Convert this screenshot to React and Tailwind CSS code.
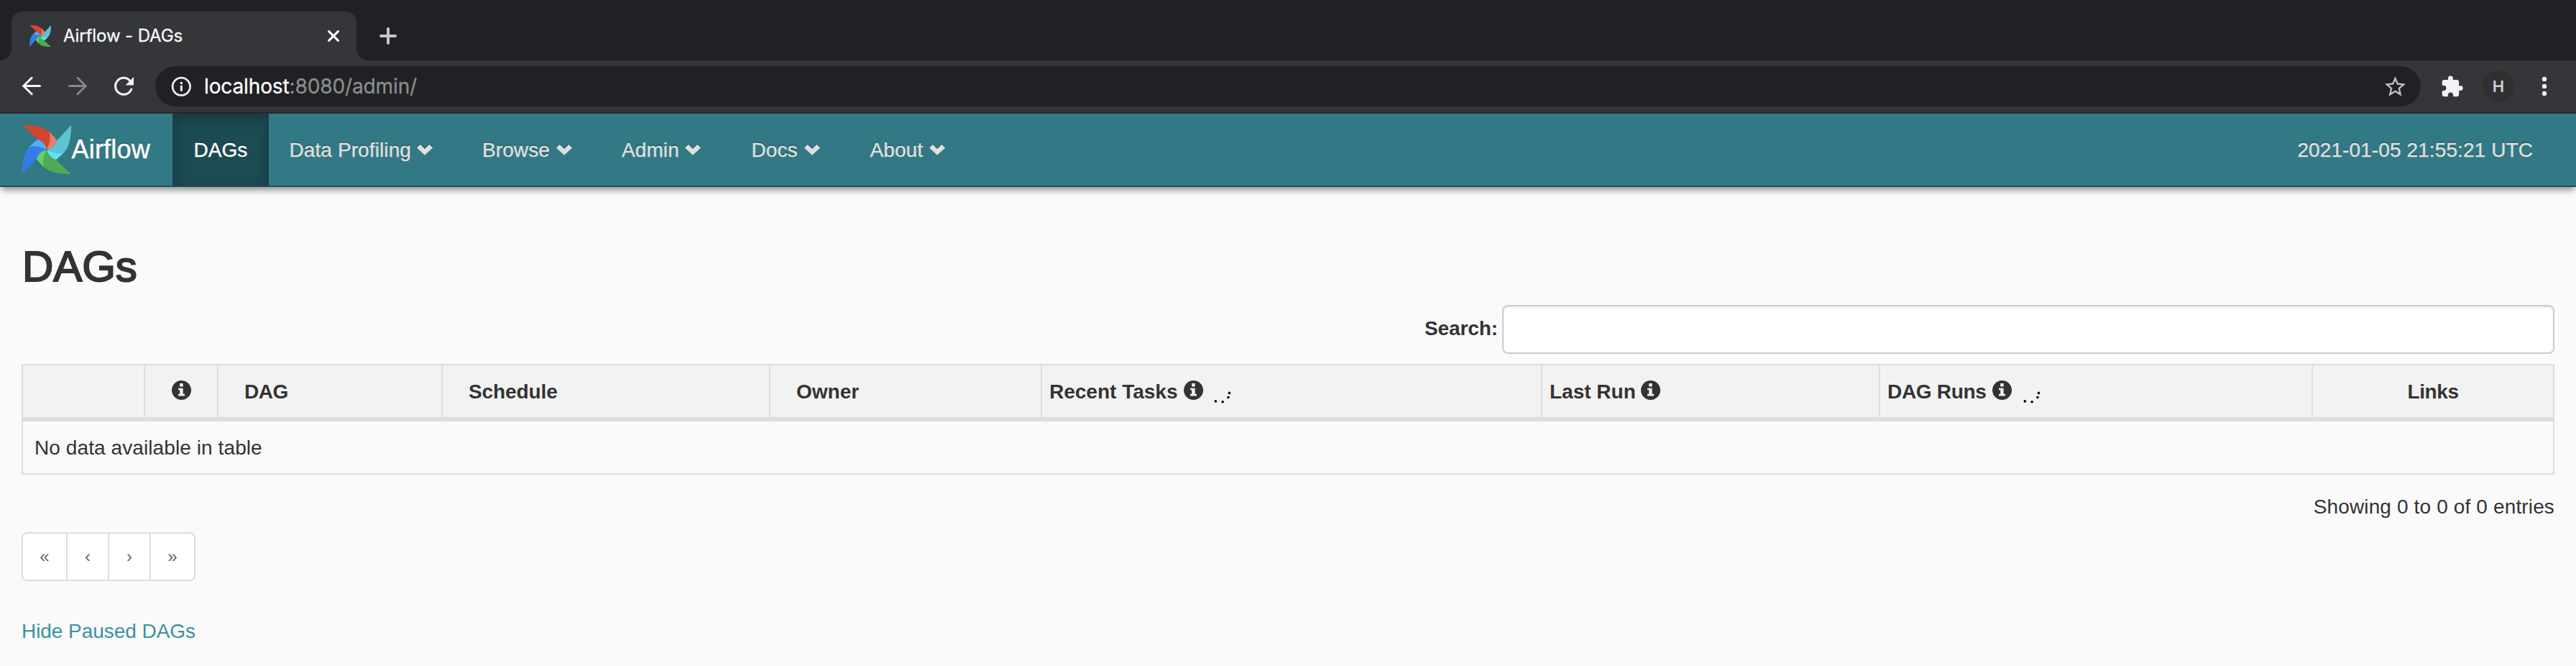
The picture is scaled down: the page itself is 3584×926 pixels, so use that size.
import React from "react";
import { MdStarBorder, MdExtension } from "react-icons/md";

const blades = [
  { angle: 0, main: "#d4452e", tip: "#ef7b60" },
  { angle: 90, main: "#5bc4d3", tip: "#66e0ee" },
  { angle: 180, main: "#4fab53", tip: "#62d36b" },
  { angle: 270, main: "#347de8", tip: "#4fb0fa" },
];

function Pinwheel({ className }) {
  return (
    <svg className={className} viewBox="0 0 204 204">
      {blades.map((b) => (
        <g key={b.angle} transform={`rotate(${b.angle} 102 102)`}>
          <path fill={b.main} d="M0 0C50 0 88 7 112 28C120 50 116 72 102 102C98 86 88 68 64 59Z" />
          <path fill={b.tip} d="M112 28C125 40 136 52 145 64C136 88 118 98 102 102C116 72 120 50 112 28Z" />
        </g>
      ))}
      <circle cx="102" cy="102" r="2.5" fill="#4a4848" />
    </svg>
  );
}

function Chevron({ className }) {
  return (
    <svg className={`-mt-[4px] h-[17px] w-[22px] shrink-0 ${className}`} viewBox="0 0 22 17">
      <path fill="#265a64" d="M0 4.5L4.5 0L11 6.5L17.5 0L22 4.5L11 13.5Z" />
      <path fill="#dfdfdf" d="M0 6.4L4.6 1.8L11 8.1L17.4 1.8L22 6.4L11 16.8Z" />
    </svg>
  );
}

function InfoIcon({ className = "" }) {
  return (
    <svg className={`relative -top-[3px] h-[27px] w-[27px] shrink-0 ${className}`} viewBox="0 0 27 27">
      <circle cx="13.5" cy="13.5" r="13.5" fill="#333" />
      <path fill="#f2f2f2" d="M11.2 4H15.6V8.4H11.2ZM9 10.8H15.6V18.8H18V21.4H9V18.8H11.2V13.2H9Z" />
    </svg>
  );
}

function Dots({ className = "" }) {
  return (
    <svg className={`relative top-[8px] h-[18px] w-[24px] shrink-0 ${className}`} viewBox="0 0 24 18">
      <circle cx="2.3" cy="13.9" r="1.8" />
      <circle cx="12.1" cy="14.8" r="1.8" />
      <circle cx="19.9" cy="8.5" r="1.8" />
      <circle cx="21.4" cy="2.4" r="1.8" />
    </svg>
  );
}

function TabStrip() {
  return (
    <div className="flex h-[84px] bg-[#35363a]">
      <div className="w-[16px] rounded-br-[16px] bg-[#202124]" />
      <div className="w-[480px] bg-[#202124] pt-[16px]">
        <div className="flex h-[68px] items-center rounded-t-[16px] bg-[#35363a] pr-[24px] pl-[25px]">
          <Pinwheel className="-mt-px h-[30px] w-[30px]" />
          <span className="ml-[17px] flex-1 text-[24px] leading-[30px] tracking-[-0.11px] whitespace-nowrap text-[#f8f9fa] [-webkit-text-stroke:0.3px_#f8f9fa]">
            Airflow - DAGs
          </span>
          <svg className="h-[16px] w-[16px]" viewBox="0 0 16 16">
            <path d="M1.6 1.6L14.4 14.4M14.4 1.6L1.6 14.4" stroke="#fff" strokeWidth="3" strokeLinecap="round" />
          </svg>
        </div>
      </div>
      <div className="flex flex-1 items-center rounded-bl-[16px] bg-[#202124] pt-[16px] pl-[32px]">
        <svg className="h-[24px] w-[24px]" viewBox="0 0 24 24">
          <path d="M12 2V22M2 12H22" stroke="#c4c6ca" strokeWidth="4" strokeLinecap="round" />
        </svg>
      </div>
    </div>
  );
}

function Toolbar() {
  return (
    <div className="flex h-[74px] items-start border-b-2 border-[#26282a] bg-[#35363a] pt-[8px]">
      <div className="flex h-[56px] w-[216px] items-center pl-[30px]">
        <svg className="h-[28px] w-[28px]" viewBox="0 0 28 28" fill="none" stroke="#f1f3f4" strokeWidth="3" strokeLinecap="round" strokeLinejoin="round">
          <path d="M25.5 13.5H2.5M14.2 2.3L2.7 13.5L14.2 24.8" />
        </svg>
        <svg className="ml-[36px] h-[28px] w-[28px]" viewBox="0 0 28 28" fill="none" stroke="#86878a" strokeWidth="3" strokeLinecap="round" strokeLinejoin="round">
          <path d="M2.5 13.5H25.5M14 2.3L25.3 13.5L14 24.8" />
        </svg>
        <svg className="ml-[36px] h-[28px] w-[28px]" viewBox="0 0 28 28">
          <path d="M24.7 18.2A11.5 11.5 0 1 1 22.5 6" fill="none" stroke="#f1f3f4" strokeWidth="3" strokeLinecap="round" />
          <path d="M28 1V12.4H16.6Z" fill="#f1f3f4" />
        </svg>
      </div>
      <div className="flex h-[56px] w-[3152px] items-center rounded-full bg-[#202124] pr-[18px] pl-[22px]">
        <svg className="h-[28px] w-[28px]" viewBox="0 0 28 28">
          <circle cx="14.3" cy="14.3" r="12.2" fill="none" stroke="#e8eaed" strokeWidth="2.8" />
          <path d="M12.8 7.9h3.1v3.1h-3.1zM12.8 12.7h3.1v8.1h-3.1z" fill="#e8eaed" />
        </svg>
        <span className="ml-[18px] flex-1 text-[28px] leading-[36px] tracking-[-0.12px] whitespace-nowrap text-[#8b8c8e] [-webkit-text-stroke:0.3px]">
          <span className="text-white">localhost</span>:8080/admin/
        </span>
        <MdStarBorder className="h-[35px] w-[35px] text-[#bfbfbf]" />
      </div>
      <div className="flex h-[56px] flex-1 items-center pl-[27px]">
        <MdExtension className="h-[33px] w-[33px] text-[#f1f3f4]" />
        <div className="ml-[26px] flex h-[44px] w-[44px] items-center justify-center rounded-full bg-[#303030] text-[22px] font-semibold text-[#d0cce0]">
          H
        </div>
        <svg className="ml-[38px] h-[28px] w-[8px]" viewBox="0 0 8 28" fill="#f1f3f4">
          <circle cx="4" cy="4" r="3.2" />
          <circle cx="4" cy="14" r="3.2" />
          <circle cx="4" cy="24" r="3.2" />
        </svg>
      </div>
    </div>
  );
}

const menus = [
  { label: "Data Profiling", cls: "w-[268px] pl-[28.5px]", gap: "ml-[8px]" },
  { label: "Browse", cls: "w-[194px] pl-[29px]", gap: "ml-[9px]" },
  { label: "Admin", cls: "w-[180px] pl-[29px]", gap: "ml-[8.5px]" },
  { label: "Docs", cls: "w-[165px] pl-[29.5px]", gap: "ml-[9px]" },
  { label: "About", cls: "w-[200px] pl-[29.5px]", gap: "ml-[9px]" },
];

function NavBar() {
  return (
    <nav className="relative h-[102px] border-b-2 border-[#1f4d56] bg-[#337985] text-[28px] text-[#dfdfdf] shadow-[0_6px_9px_-2px_rgba(0,0,0,0.45)] [-webkit-text-stroke:0.4px] [text-shadow:0_-2px_0_rgba(0,0,0,0.25)]">
      <div className="flex h-[100px]">
        <div className="flex w-[240px] items-center pl-[31px] text-[36px] text-white">
          <Pinwheel className="h-[68px] w-[68px]" />
          <span className="ml-[0.5px] tracking-[0.2px]">Airflow</span>
        </div>
        <div className="flex w-[134px] items-center bg-[#1d4b53] pt-[1px] pl-[29.5px] text-white shadow-[inset_0_6px_18px_rgba(0,0,0,0.25)]">
          DAGs
        </div>
        {menus.map((m) => (
          <div key={m.label} className={`flex items-center pt-[2px] whitespace-nowrap ${m.cls}`}>
            <span className="tracking-[0.1px]">{m.label}</span>
            <Chevron className={m.gap} />
          </div>
        ))}
        <div className="ml-auto flex items-center pt-[2px] pr-[60px] tracking-[0.1px] whitespace-nowrap">2021-01-05 21:55:21 UTC</div>
      </div>
    </nav>
  );
}

function HeaderCell({ className = "", children }) {
  return <div className={`flex h-[72px] items-center border-l-2 border-[#ddd] pt-[2px] whitespace-nowrap ${className}`}>{children}</div>;
}

function DagTable() {
  return (
    <div className="mt-[14px] border-y-2 border-r-2 border-[#ddd]">
      <div className="grid grid-cols-[170px_102px_312px_456px_378px_696px_470px_602px_1fr] border-b-[6px] border-[#ddd] bg-[#f2f2f2] font-bold">
        <HeaderCell />
        <HeaderCell className="justify-center">
          <InfoIcon />
        </HeaderCell>
        <HeaderCell className="pl-[36px] tracking-[-0.5px]">DAG</HeaderCell>
        <HeaderCell className="pl-[36px] tracking-[-0.1px]">Schedule</HeaderCell>
        <HeaderCell className="pl-[36px]">Owner</HeaderCell>
        <HeaderCell className="pl-[10px]">
          Recent Tasks
          <InfoIcon className="ml-[9px]" />
          <Dots className="ml-[14.5px]" />
        </HeaderCell>
        <HeaderCell className="pl-[10px]">
          Last Run
          <InfoIcon className="ml-[7.5px]" />
        </HeaderCell>
        <HeaderCell className="pl-[10px]">
          <span className="tracking-[-0.3px]">DAG Runs</span>
          <InfoIcon className="ml-[8.5px]" />
          <Dots className="ml-[16px]" />
        </HeaderCell>
        <HeaderCell className="justify-center tracking-[-0.4px]">Links</HeaderCell>
      </div>
      <div className="flex h-[72px] items-center border-l-2 border-[#ddd] bg-[#f9f9f9] pt-[2px] pl-[16px] tracking-[0.09px]">
        No data available in table
      </div>
    </div>
  );
}

function Pagination() {
  return (
    <div className="mt-[15px] flex h-[68px] w-[242px] overflow-hidden rounded-[8px] border-2 border-[#ddd] bg-white text-[24px] text-[#666]">
      <div className="flex w-[60px] items-center justify-center">«</div>
      <div className="flex w-[58px] items-center justify-center border-l-2 border-[#ddd]">‹</div>
      <div className="flex w-[58px] items-center justify-center border-l-2 border-[#ddd]">›</div>
      <div className="flex flex-1 items-center justify-center border-l-2 border-[#ddd]">»</div>
    </div>
  );
}

export default function App() {
  return (
    <div className="h-[926px] w-[3584px] overflow-hidden bg-[#fafafa]">
      <header className="font-['Inter',sans-serif]">
        <TabStrip />
        <Toolbar />
      </header>
      <div className="font-['Liberation_Sans',Arial,sans-serif] text-[28px] leading-[40px] text-[#333]">
        <NavBar />
        <main className="px-[30px] pt-[78px]">
          <h2 className="ml-px h-[66px] text-[60px] leading-[66px] tracking-[-0.1px] [-webkit-text-stroke:2px_#333]">DAGs</h2>
          <div className="mt-[20px] flex items-center justify-end">
            <label className="-mt-[3px] mr-[6px] tracking-[-0.1px] font-bold">Search:</label>
            <input className="h-[68px] w-[1464px] rounded-[8px] border-2 border-[#ccc] bg-white px-[24px] shadow-[inset_0_2px_2px_rgba(0,0,0,0.075)]" />
          </div>
          <DagTable />
          <div className="mt-[25px] text-right tracking-[0.14px]">Showing 0 to 0 of 0 entries</div>
          <Pagination />
          <a className="mt-[50px] block tracking-[-0.05px] text-[#3d91a1]">Hide Paused DAGs</a>
        </main>
      </div>
    </div>
  );
}
